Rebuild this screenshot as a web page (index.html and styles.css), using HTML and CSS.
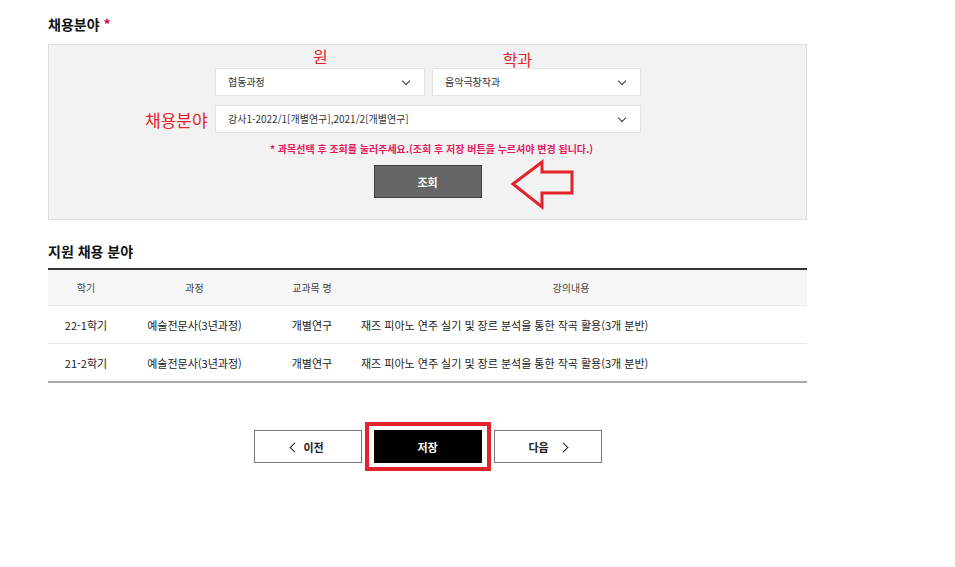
FILE: index.html
```html
<!DOCTYPE html>
<html lang="ko">
<head>
    <meta charset="UTF-8">
    <meta name="viewport" content="width=device-width, initial-scale=1.0">
    <title>채용분야</title>
    <link rel="stylesheet" href="styles.css">
</head>
<body>
    <div class="container">
        <h2 class="title">채용분야 <span class="req">*</span></h2>

        <div class="search-box">
            <div class="mark-row">
                <span class="mark mark-won">원</span>
                <span class="mark mark-dept">학과</span>
            </div>
            <div class="select-row">
                <div class="select half-a">협동과정<i class="chev"></i></div>
                <div class="select half-b">음악극창작과<i class="chev"></i></div>
            </div>
            <div class="select-row second">
                <span class="mark mark-field">채용분야</span>
                <div class="select full">강사1-2022/1[개별연구],2021/2[개별연구]<i class="chev"></i></div>
            </div>
            <p class="notice">* 과목선택 후 조회를 눌러주세요.(조회 후 저장 버튼을 누르셔야 변경 됩니다.)</p>
            <div class="search-row">
                <button class="btn-search">조회</button>
                <svg class="arrow" width="66" height="52" viewBox="0 0 66 52">
                    <polygon points="3,25 32,3 32,13 62,13 62,34 32,34 32,48" fill="none" stroke="#e3232b" stroke-width="3"/>
                </svg>
            </div>
        </div>

        <h3 class="sub-title">지원 채용 분야</h3>
        <table class="list">
            <colgroup>
                <col style="width:76px">
                <col style="width:141px">
                <col style="width:84px">
                <col>
            </colgroup>
            <thead>
                <tr>
                    <th>학기</th>
                    <th>과정</th>
                    <th class="subj">교과목 명</th>
                    <th class="cont">강의내용</th>
                </tr>
            </thead>
            <tbody>
                <tr>
                    <td>22-1학기</td>
                    <td>예술전문사(3년과정)</td>
                    <td class="subj">개별연구</td>
                    <td class="left">재즈 피아노 연주 실기 및 장르 분석을 통한 작곡 활용(3개 분반)</td>
                </tr>
                <tr>
                    <td>21-2학기</td>
                    <td>예술전문사(3년과정)</td>
                    <td class="subj">개별연구</td>
                    <td class="left">재즈 피아노 연주 실기 및 장르 분석을 통한 작곡 활용(3개 분반)</td>
                </tr>
            </tbody>
        </table>

        <div class="btn-area">
            <button class="btn-line"><i class="ico-prev"></i>이전</button>
            <span class="save-mark"><button class="btn-save">저장</button></span>
            <button class="btn-line">다음<i class="ico-next"></i></button>
        </div>
    </div>
</body>
</html>
```

FILE: styles.css
```css
html,
body {
    min-height: 100%;
}
body {
    margin: 0;
    padding: 0;
    font-family: "Noto Sans CJK KR", "Noto Sans", sans-serif;
    color: #222;
    background: #fff;
}
.container {
    width: 759px;
    padding: 13px 0 100px 48px;
}
.title {
    margin: 0;
    font-size: 14px;
    font-weight: 700;
    line-height: 22px;
    color: #111;
}
.req {
    color: #e4003f;
}

/* search box */
.search-box {
    position: relative;
    margin-top: 9px;
    height: 174px;
    border: 1px solid #dcdcdc;
    background: #f2f2f2;
}
.mark {
    color: #e3232b;
    line-height: 1;
}
.mark-row {
    display: flex;
    height: 23px;
    padding-left: 264px;
}
.mark-won {
    font-size: 16px;
    padding-top: 3px;
}
.mark-dept {
    font-size: 16px;
    padding-top: 6px;
    margin-left: 175px;
}
.select-row {
    display: flex;
    align-items: center;
    gap: 7px;
    padding-left: 166px;
}
.select-row.second {
    margin-top: 9px;
    padding-left: 96px;
    gap: 8px;
}
.mark-field {
    width: 62px;
    font-size: 17px;
    white-space: nowrap;
}
.select {
    position: relative;
    box-sizing: border-box;
    height: 28px;
    line-height: 26px;
    padding-left: 12px;
    border: 1px solid #e3e3e3;
    background: #fff;
    font-size: 10px;
    color: #333;
}
.half-a { width: 210px; }
.half-b { width: 209px; }
.full { width: 426px; }
.chev {
    position: absolute;
    right: 15px;
    top: 9px;
    width: 5px;
    height: 5px;
    border-right: 1.3px solid #333;
    border-bottom: 1.3px solid #333;
    transform: rotate(45deg);
}
.notice {
    margin: 9px 0 0;
    text-align: center;
    font-size: 10px;
    font-weight: 700;
    line-height: 14px;
    color: #e8175d;
    padding-left: 8px;
}
.search-row {
    position: relative;
    display: flex;
    justify-content: center;
    margin-top: 9px;
}
.btn-search {
    width: 108px;
    height: 33px;
    border: 1px solid #3f3f3f;
    background: #666;
    color: #fff;
    font-family: inherit;
    font-size: 11px;
    font-weight: 700;
}
.arrow {
    position: absolute;
    left: 461px;
    top: -6px;
}

/* list */
.sub-title {
    margin: 20px 0 0;
    font-size: 14px;
    font-weight: 700;
    line-height: 22px;
    color: #111;
}
.list {
    width: 100%;
    margin-top: 6px;
    border-collapse: collapse;
    border-top: 2px solid #333;
    border-bottom: 2px solid #aaa;
    font-size: 11px;
    color: #222;
}
.list th {
    height: 35px;
    padding: 0;
    background: #f7f7f7;
    font-weight: 400;
    font-size: 10px;
    color: #444;
}
.list th.cont {
    padding-right: 14px;
}
.list td {
    height: 37px;
    padding: 0;
    text-align: center;
    border-top: 1px solid #e8e8e8;
}
.list .subj {
    padding-left: 10px;
    white-space: nowrap;
}
.list td.left {
    text-align: left;
    padding-left: 12px;
}

/* bottom buttons */
.btn-area {
    display: flex;
    justify-content: center;
    align-items: center;
    gap: 12px;
    margin-top: 47px;
}
.btn-area button {
    width: 108px;
    height: 33px;
    font-family: inherit;
    font-size: 11px;
    font-weight: 700;
}
.btn-line {
    border: 1px solid #777;
    background: #fff;
    color: #222;
}
.ico-prev,
.ico-next {
    display: inline-block;
    width: 6px;
    height: 6px;
    border-left: 1.3px solid #222;
    border-bottom: 1.3px solid #222;
    vertical-align: 1px;
}
.ico-prev {
    transform: rotate(45deg);
    margin-right: 5px;
}
.ico-next {
    transform: rotate(-135deg);
    margin-left: 11px;
}
.save-mark {
    display: block;
    margin: -8px -9px;
    padding: 4px 5px;
    border: 4px solid #e3232b;
}
.btn-save {
    display: block;
    border: 1px solid #000;
    background: #000;
    color: #fff;
}
```
